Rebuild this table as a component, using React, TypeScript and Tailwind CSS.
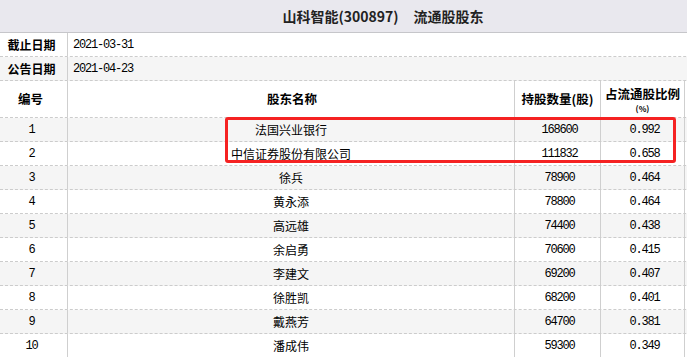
const cn = '"Noto Sans CJK SC", sans-serif';
const num = '"Liberation Mono", "Noto Sans CJK SC", monospace';

const rows = [
  { no: 1, name: '法国兴业银行', qty: '168600', pct: '0.992' },
  { no: 2, name: '中信证券股份有限公司', qty: '111832', pct: '0.658' },
  { no: 3, name: '徐兵', qty: '78900', pct: '0.464' },
  { no: 4, name: '黄永添', qty: '78800', pct: '0.464' },
  { no: 5, name: '高远雄', qty: '74400', pct: '0.438' },
  { no: 6, name: '余启勇', qty: '70600', pct: '0.415' },
  { no: 7, name: '李建文', qty: '69200', pct: '0.407' },
  { no: 8, name: '徐胜凯', qty: '68200', pct: '0.401' },
  { no: 9, name: '戴燕芳', qty: '64700', pct: '0.381' },
  { no: 10, name: '潘成伟', qty: '59300', pct: '0.349' },
];

const cols = 'grid grid-cols-[68px_447px_86px_84px_81px]';
const cell = 'border-r border-[#cfcfcf] flex items-center justify-center';

export default function App() {
  return (
    <div className="w-[687px] h-[357px] overflow-hidden bg-white text-black" style={{ fontFamily: cn }}>
      <div className="relative w-[766px]">
        {/* title */}
        <div className="h-[33px] bg-[#e9e8ee] border-b border-[#c6c6ca] flex items-center justify-center text-[14px] font-bold text-[#222]">
          <span>山科智能(300897)</span>
          <span className="ml-[15px]">流通股股东</span>
        </div>

        {/* dates */}
        {[
          ['截止日期', '2021-03-31', 'bg-white'],
          ['公告日期', '2021-04-23', 'bg-[#f5f5f5]'],
        ].map(([label, date, bg]) => (
          <div key={label} className={`h-[24px] flex border-b border-dashed border-[#cccccc] ${bg}`}>
            <div className="w-[68px] border-r border-[#cfcfcf] flex items-center justify-center pr-[4px] text-[12px] font-bold">
              {label}
            </div>
            <div className="flex items-center pl-[5px] text-[12px] tracking-[-1.2px]" style={{ fontFamily: num }}>
              {date}
            </div>
          </div>
        ))}

        {/* header */}
        <div className={`${cols} h-[37px] border-b border-dashed border-[#cccccc] text-[12.5px] font-bold`}>
          <div className={`${cell} pr-[6px]`}>编号</div>
          <div className={`${cell} pl-[2px]`}>股东名称</div>
          <div className={cell}>持股数量(股)</div>
          <div className={`${cell} flex-col`}>
            <span className="block whitespace-nowrap text-[12.5px] leading-[19px]">占流通股比例</span>
            <span className="block text-[8px] leading-[12px]">(%)</span>
          </div>
          <div className={cell}></div>
        </div>

        {/* data rows */}
        {rows.map((r) => (
          <div
            key={r.no}
            className={`${cols} h-[24px] border-b border-dashed border-[#cccccc] text-[12px] ${r.no % 2 ? 'bg-[#f5f5f5]' : 'bg-white'}`}
          >
            <div className={`${cell} pr-[4px] tracking-[-1.2px]`} style={{ fontFamily: num }}>{r.no}</div>
            <div className={cell}>{r.name}</div>
            <div className={`${cell} pl-[4px] tracking-[-1.2px]`} style={{ fontFamily: num }}>{r.qty}</div>
            <div className={`${cell} pl-[4px] tracking-[-1.2px]`} style={{ fontFamily: num }}>{r.pct}</div>
            <div className={cell}></div>
          </div>
        ))}

        {/* red highlight annotation */}
        <div className="absolute left-[225px] top-[117px] w-[451px] h-[46px] border-[3px] border-[#f52222] rounded-[3px]" />
      </div>
    </div>
  );
}
